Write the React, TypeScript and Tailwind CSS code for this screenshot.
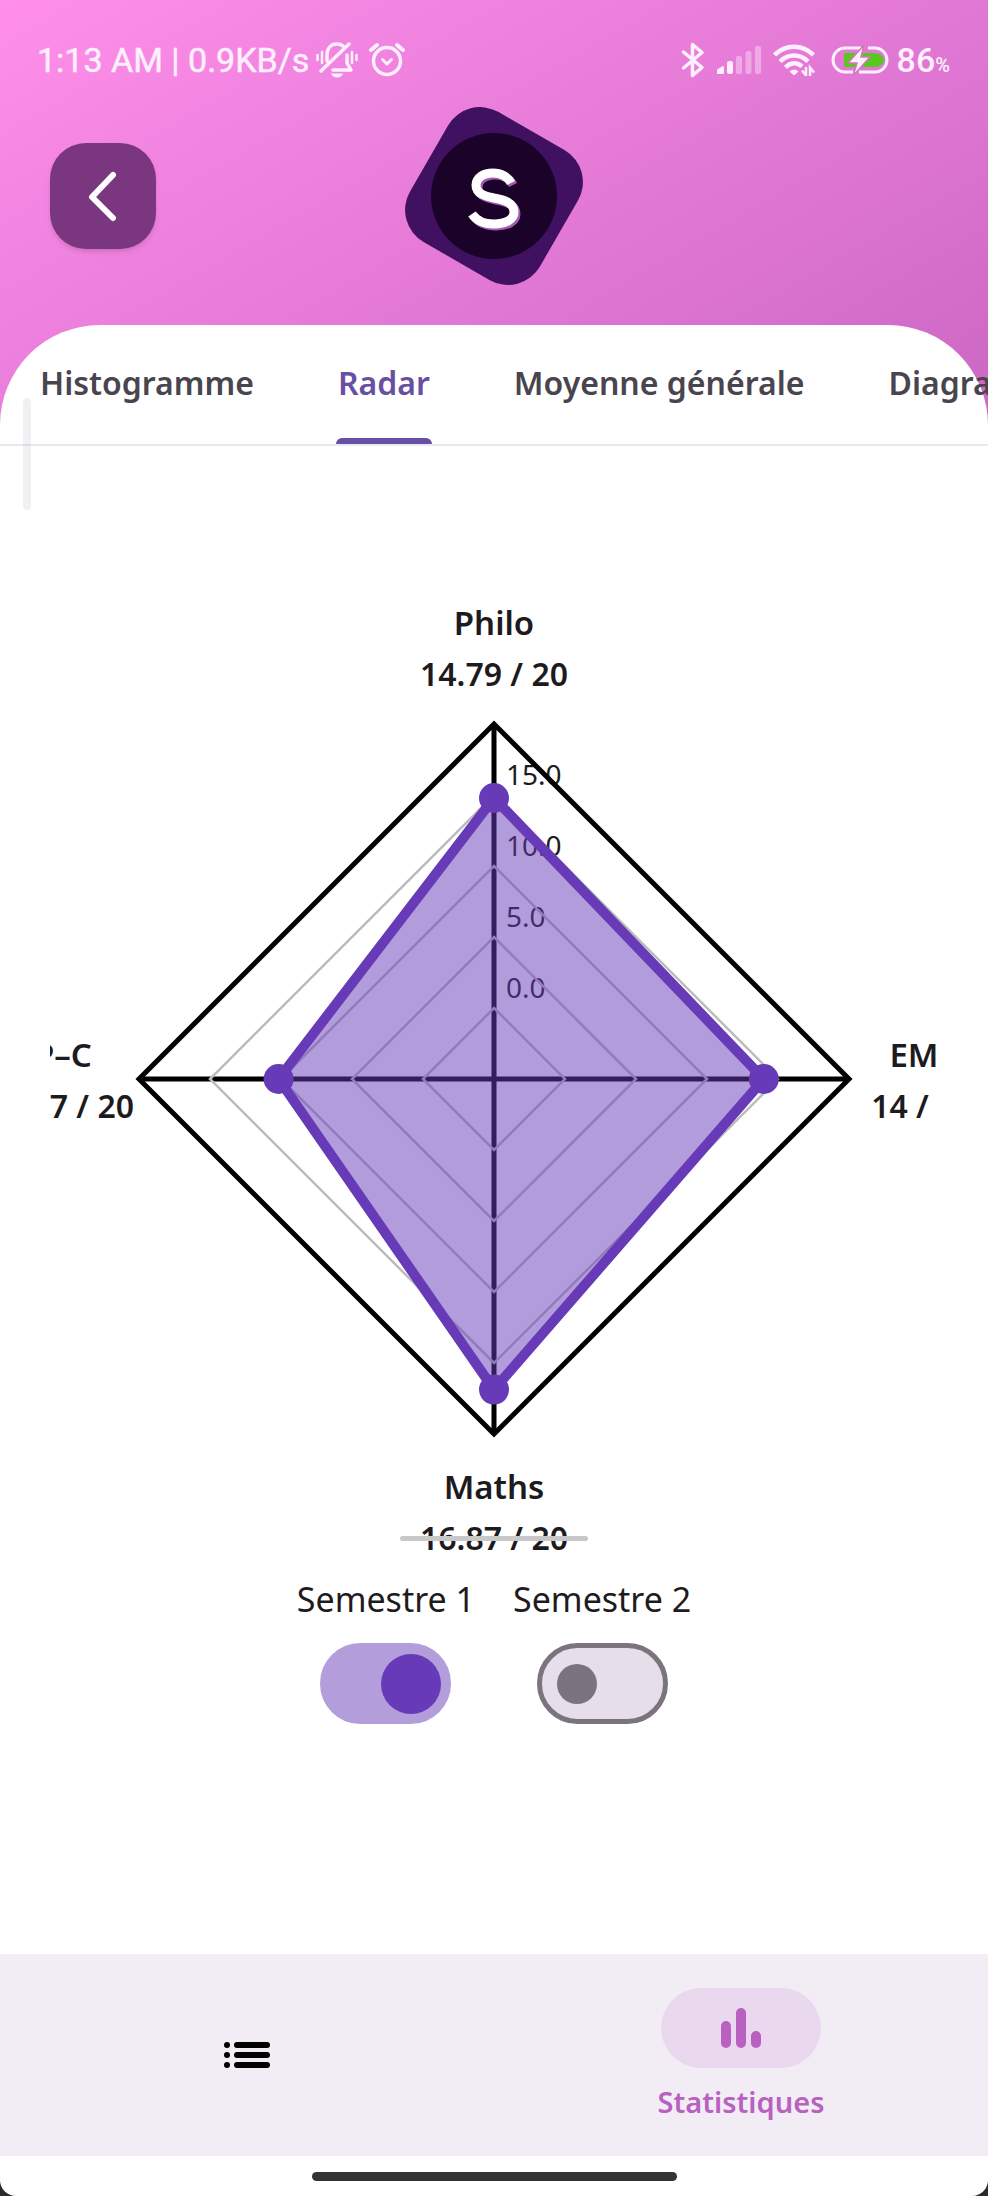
import { useState } from "react";

const CENTER = { x: 444, y: 499 };
const RADIUS = 355;

const ringLabels = [
  { ring: 4, text: "15.0" },
  { ring: 3, text: "10.0" },
  { ring: 2, text: "5.0" },
  { ring: 1, text: "0.0" },
];

const marks = { top: 14.79, right: 14, bottom: 16.87, left: 10.17 };

const reach = (mark: number) => RADIUS * (0.2 + (mark / 20) * 0.8);

const diamond = (t: number, r: number, b: number, l: number) =>
  `${CENTER.x},${CENTER.y - t} ${CENTER.x + r},${CENTER.y} ${CENTER.x},${CENTER.y + b} ${CENTER.x - l},${CENTER.y}`;

function MutedBellIcon() {
  return (
    <svg width="42" height="36" viewBox="0 0 42 36" fill="none" stroke="currentColor" strokeWidth="3.5" strokeLinecap="round" strokeLinejoin="round" aria-hidden="true">
      <path d="M11 19V13C11 6 15 2 21 2c2.500 0 4.500.6 6 2" />
      <path d="M31 13v8l4 7H17" />
      <path d="M33 2 5 29" />
      <path d="M1.500 13v5M6 10v11M36 10v11M40.500 13v5" strokeWidth="2.500" />
      <path d="M15 31.500h12c-1 2.500-3 4-6 4s-5-1.500-6-4z" fill="currentColor" stroke="none" />
    </svg>
  );
}

function AlarmIcon() {
  return (
    <svg width="36" height="36" viewBox="0 0 36 36" fill="none" stroke="currentColor" strokeWidth="3.5" strokeLinecap="round" strokeLinejoin="round" aria-hidden="true">
      <circle cx="18" cy="19" r="13.500" />
      <path d="M13.500 17.500l4.500 4.500 4.500-4.500" strokeWidth="3" />
      <path d="M2 8 8 3M34 8l-6-5" strokeWidth="4" />
    </svg>
  );
}

function BluetoothIcon() {
  return (
    <svg width="24" height="36" viewBox="0 0 24 36" fill="none" stroke="currentColor" strokeWidth="3.5" strokeLinecap="round" strokeLinejoin="round" aria-hidden="true">
      <path d="M2.500 10 21 25.500 11.500 33.500V2.500L21 10.500 2.500 26" />
    </svg>
  );
}

function SignalIcon() {
  return (
    <svg width="44" height="28" viewBox="0 0 44 28" fill="currentColor" aria-hidden="true">
      <path d="M1 27v-3l5-3v6z" stroke="currentColor" strokeWidth="2" strokeLinejoin="round" />
      <rect x="10" y="15" width="6" height="13" rx="2" />
      <g opacity="0.4">
        <rect x="19" y="10" width="6" height="18" rx="2" />
        <rect x="28.500" y="5" width="6" height="23" rx="2" />
        <rect x="38" y="0" width="6" height="28" rx="2" />
      </g>
    </svg>
  );
}

function WifiIcon() {
  return (
    <svg width="42" height="32" viewBox="0 0 42 32" fill="none" stroke="currentColor" strokeWidth="4.5" aria-hidden="true">
      <path d="M1.500 11C12.500 0 29.500 0 40.500 11" />
      <path d="M7 17.500C15 9.500 27 9.500 35 17.500" />
      <path d="M12.500 23.500C17.500 18 24.500 18 29 22.500" />
      <path d="M16.500 27.500c2.500-2.800 6.500-2.800 9 0l-4.500 4z" fill="currentColor" stroke="none" />
      <path d="M33 23v8.500l-4-5M37 32v-8.500l4 5" strokeWidth="2.500" />
    </svg>
  );
}

function BatteryIcon() {
  return (
    <svg width="58" height="32" viewBox="0 0 58 32" aria-hidden="true">
      <path d="M30 4H14a12 12 0 0 0 0 24h8M37 4h7a12 12 0 0 1 0 24H28" fill="none" stroke="currentColor" strokeWidth="3" />
      <path d="M13 9h30c13 0 13 14 0 14H13z" fill="#58c81c" />
      <path d="M33 1 17 19h9l-4 13 17-19h-9z" fill="currentColor" stroke="#cf78ba" strokeWidth="1.500" />
    </svg>
  );
}

function StatusBar() {
  return (
    <div className="flex h-11 items-center justify-between pr-[38px] pl-[37px] font-[Roboto,sans-serif] text-[34px] leading-none font-medium text-[#fdeffd]">
      <div className="flex items-center gap-[7px]">
        <span className="font-normal [-webkit-text-stroke:0.5px_#fdeffd]">1:13 AM | 0.9KB/s</span>
        <MutedBellIcon />
        <span className="pl-1">
          <AlarmIcon />
        </span>
      </div>
      <div className="flex items-center gap-3">
        <BluetoothIcon />
        <SignalIcon />
        <WifiIcon />
        <span className="pl-1">
          <BatteryIcon />
        </span>
        <span className="-ml-1 flex items-baseline">
          86<span className="text-[20px]">%</span>
        </span>
      </div>
    </div>
  );
}

function Logo() {
  const letter = "M107 77C104 71 97 67 89 67c-10 0-17 5-17 12 0 9 9 11 18 13 11 2 20 5 20 14 0 8-9 12-20 12-10 0-18-4-22-10";
  return (
    <svg className="size-[180px] justify-self-center" viewBox="0 0 180 180" role="img" aria-label="S">
      <rect x="15" y="15" width="150" height="150" rx="37" fill="#3f1160" transform="rotate(30 90 90)" />
      <circle cx="90" cy="90" r="63" fill="#1a0228" />
      <path d={letter} transform="translate(2 2)" fill="none" stroke="#a35bb5" strokeWidth="9" />
      <path d={letter} fill="none" stroke="#fff" strokeWidth="9" />
    </svg>
  );
}

function RadarChart({ showData }: { showData: boolean }) {
  const t = reach(marks.top);
  const r = reach(marks.right);
  const b = reach(marks.bottom);
  const l = reach(marks.left);
  return (
    <svg className="block w-full" viewBox="0 0 888 990" role="img" aria-label="Radar">
      <g fill="#1d1b20" fontSize="28">
        {ringLabels.map(({ ring, text }) => (
          <text key={text} x={CENTER.x + 12} y={CENTER.y - ring * 71 - 10}>
            {text}
          </text>
        ))}
      </g>
      <path d={`M${CENTER.x} ${CENTER.y - RADIUS}v${RADIUS * 2}M${CENTER.x - RADIUS} ${CENTER.y}h${RADIUS * 2}`} stroke="#000" strokeWidth="5" />
      {[1, 2, 3, 4].map((ring) => (
        <polygon key={ring} points={diamond(ring * 71, ring * 71, ring * 71, ring * 71)} fill="none" stroke="#bdbdbd" strokeWidth="2.500" />
      ))}
      <polygon points={diamond(RADIUS, RADIUS, RADIUS, RADIUS)} fill="none" stroke="#000" strokeWidth="5" />
      {showData && (
        <g fill="#673ab7">
          <polygon points={diamond(t, r, b, l)} fillOpacity="0.5" />
          <polygon points={diamond(t, r, b, l)} fill="none" stroke="#673ab7" strokeWidth="10" strokeLinejoin="round" />
          <circle cx={CENTER.x} cy={CENTER.y - t} r="15" />
          <circle cx={CENTER.x + r} cy={CENTER.y} r="15" />
          <circle cx={CENTER.x} cy={CENTER.y + b} r="15" />
          <circle cx={CENTER.x - l} cy={CENTER.y} r="15" />
        </g>
      )}
      <g fill="#1d1b20" fontSize="33" fontWeight="600" textAnchor="middle">
        <text x="444" y="55">Philo</text>
        <text x="13" y="487">P–C</text>
        <text x="864" y="487">EM</text>
        <text x="444" y="919">Maths</text>
      </g>
      <g fill="#1d1b20" fontSize="32" fontWeight="600" textAnchor="middle">
        <text x="444" y="106">14.79 / 20</text>
        <text x="10" y="538">10.17 / 20</text>
        <text x="850" y="538">14 /</text>
        <text x="444" y="970">16.87 / 20</text>
      </g>
    </svg>
  );
}

function SemesterSwitch({ label, checked, onChange }: { label: string; checked: boolean; onChange: (value: boolean) => void }) {
  return (
    <label className="flex flex-col items-center gap-[22px] text-[34px] leading-[44px] text-[#1d1b20]">
      {label}
      <input
        type="checkbox"
        role="switch"
        checked={checked}
        onChange={(event) => onChange(event.target.checked)}
        className="flex h-[81px] w-[131px] cursor-pointer appearance-none items-center rounded-full border-[5px] border-[#7b747f] bg-[#e6dfea] px-[15px] before:size-10 before:rounded-full before:bg-[#7b747f] checked:justify-end checked:border-[#b39ddb] checked:bg-[#b39ddb] checked:px-[5px] checked:before:size-[60px] checked:before:bg-[#673ab7]"
      />
    </label>
  );
}

const tabs = ["Histogramme", "Radar", "Moyenne générale", "Diagramme"];

export default function App() {
  const [activeTab, setActiveTab] = useState("Radar");
  const [first, setFirst] = useState(true);
  const [second, setSecond] = useState(false);

  return (
    <div className="min-h-screen bg-[#2b2b2b] font-['Noto_Sans',sans-serif]">
      <div className="flex min-h-screen flex-col overflow-hidden rounded-b-2xl bg-white">
        <div className="bg-linear-150 from-[#ff8feb] to-[#cb66c3]">
          <header className="pt-[38px]">
            <StatusBar />
            <div className="grid grid-cols-3 items-center px-[50px] pt-6 pb-[39px]">
              <button type="button" aria-label="Retour" className="flex size-[106px] items-center justify-center rounded-[36px] bg-[#7a367f] shadow-md">
                <svg width="32" height="52" viewBox="0 0 32 52" fill="none" stroke="#fff" strokeWidth="6" strokeLinecap="round" strokeLinejoin="round" aria-hidden="true">
                  <path d="M26 5 5 27l21 21" />
                </svg>
              </button>
              <Logo />
            </div>
          </header>
          <div className="relative h-[121px] rounded-t-[100px] bg-white">
            <div role="tablist" className="flex h-full overflow-hidden border-b-2 border-[#ece8ee] whitespace-nowrap">
              {tabs.map((tab) => (
                <button
                  key={tab}
                  type="button"
                  role="tab"
                  aria-selected={tab === activeTab}
                  onClick={() => setActiveTab(tab)}
                  className={`relative shrink-0 px-[42px] pb-1 text-[32px] font-semibold first:pl-10 ${tab === activeTab ? "text-[#6750a4]" : "text-[#49454f]"}`}
                >
                  {tab}
                  {tab === activeTab && <span className="absolute inset-x-10 bottom-0 h-[6px] rounded-t-md bg-[#6750a4]" />}
                </button>
              ))}
            </div>
            <div className="absolute top-[73px] left-[23px] h-[112px] w-2 rounded-full bg-[#787080]/10" />
          </div>
        </div>

        <main className="flex grow flex-col px-[50px] pt-[134px]">
          <div className="relative">
            <RadarChart showData={first} />
            <div className="absolute bottom-[29px] left-1/2 h-[5px] w-[188px] -translate-x-1/2 rounded-full bg-[#c8c8c8]" />
          </div>
          <div className="flex justify-center gap-[38px] pt-[7px]">
            <SemesterSwitch label="Semestre 1" checked={first} onChange={setFirst} />
            <SemesterSwitch label="Semestre 2" checked={second} onChange={setSecond} />
          </div>
        </main>

        <nav className="grid h-[202px] grid-cols-2 bg-[#f2edf5]">
          <a href="#liste" aria-label="Liste" className="flex items-center justify-center">
            <svg width="48" height="28" viewBox="0 0 48 28" aria-hidden="true">
              {[4, 14, 24].map((y) => (
                <g key={y}>
                  <circle cx="4" cy={y} r="3" />
                  <rect x="11" y={y - 3} width="36" height="6" rx="3" />
                </g>
              ))}
            </svg>
          </a>
          <a href="#statistiques" aria-current="page" className="flex flex-col items-center gap-4 pt-[34px] text-[29px] leading-9 font-semibold text-[#b861c0]">
            <span className="flex h-20 w-40 items-center justify-center rounded-full bg-[#ead9ee]">
              <svg width="40" height="40" viewBox="0 0 40 40" fill="currentColor" aria-hidden="true">
                <rect x="0" y="13" width="10" height="27" rx="5" />
                <rect x="15" y="0" width="10" height="40" rx="5" />
                <rect x="30" y="23" width="10" height="17" rx="5" />
              </svg>
            </span>
            Statistiques
          </a>
        </nav>
        <div className="flex h-10 items-center justify-center">
          <div className="h-[9px] w-[365px] rounded-full bg-[#353334]" />
        </div>
      </div>
    </div>
  );
}
